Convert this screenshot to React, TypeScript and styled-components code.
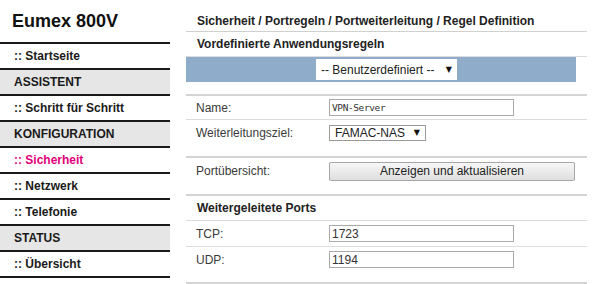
import React from "react";
import styled, { createGlobalStyle } from "styled-components";

const GlobalStyle = createGlobalStyle`
  html, body {
    margin: 0;
    padding: 0;
    background: #fff;
  }
  body {
    font-family: "Liberation Sans", Arial, sans-serif;
    font-size: 12px;
    color: #333;
  }
`;

const Page = styled.div`
  display: flex;
  width: 595px;
  height: 284px;
  overflow: hidden;
`;

const Sidebar = styled.nav`
  width: 170px;
  flex-shrink: 0;
`;

const Brand = styled.div`
  height: 42px;
  display: flex;
  align-items: center;
  padding-left: 12px;
  font-size: 18px;
  font-weight: bold;
  color: #111;
`;

const NavList = styled.ul`
  list-style: none;
  margin: 0;
  padding: 0;
  border-bottom: 2px solid #1a1a1a;
`;

const NavItem = styled.li<{ $group?: boolean; $active?: boolean }>`
  height: 24px;
  display: flex;
  align-items: center;
  padding-left: 14px;
  border-top: 2px solid #1a1a1a;
  background: ${({ $group }) => ($group ? "#e6e6e6" : "#fff")};
  color: ${({ $active }) => ($active ? "#e2007a" : "#1a1a1a")};
  font-size: 12px;
  font-weight: bold;
`;

const Main = styled.main`
  margin-left: 16px;
  width: 401px;
`;

const Group = styled.section<{ $pad: number }>`
  padding-bottom: ${({ $pad }) => $pad}px;
  border-bottom: 2px solid #d4d4d4;
`;

const Breadcrumb = styled.div`
  height: 32px;
  box-sizing: border-box;
  display: flex;
  align-items: flex-end;
  padding: 0 0 3px 11px;
  border-bottom: 1px solid #d0d0d0;
  font-weight: bold;
  color: #222;
`;

const Heading = styled.div<{ $divider?: boolean }>`
  height: 24px;
  display: flex;
  align-items: center;
  padding-left: 11px;
  border-bottom: ${({ $divider }) => ($divider ? "1px solid #dcdcdc" : "none")};
  font-weight: bold;
  color: #222;
`;

const BlueBar = styled.div`
  height: 25px;
  margin-right: 11px;
  padding-left: 11px;
  display: flex;
  align-items: center;
  justify-content: center;
  background: #8fadca;
`;

const Row = styled.div<{ $h: number; $divider?: boolean }>`
  height: ${({ $h }) => $h}px;
  display: grid;
  grid-template-columns: 133px 1fr;
  align-items: center;
  padding-left: 10px;
  border-bottom: ${({ $divider }) => ($divider ? "1px solid #dcdcdc" : "none")};
`;

const Label = styled.span`
  color: #3a3a3a;
`;

const Dropdown = styled.div<{ $w: number; $h: number; $bordered?: boolean }>`
  width: ${({ $w }) => $w}px;
  height: ${({ $h }) => $h}px;
  box-sizing: border-box;
  display: flex;
  align-items: center;
  justify-content: space-between;
  padding: 0 5px;
  background: #fff;
  border: ${({ $bordered }) => ($bordered ? "1px solid #9a9a9a" : "none")};
  color: #222;
`;

const Caret = styled.span`
  font-family: "DejaVu Sans", sans-serif;
  font-size: 8px;
  color: #111;
`;

const TextInput = styled.input<{ $mono?: boolean }>`
  width: 185px;
  height: 17px;
  box-sizing: border-box;
  margin: 0;
  padding: 0 2px;
  border: 1px solid #a9a9a9;
  border-radius: 0;
  outline: none;
  font-family: ${({ $mono }) =>
    $mono ? `"DejaVu Sans Mono", monospace` : `"Liberation Sans", Arial, sans-serif`};
  font-size: ${({ $mono }) => ($mono ? "9.5px" : "12px")};
  letter-spacing: ${({ $mono }) => ($mono ? "-0.4px" : "0")};
  color: #333;
`;

const ActionButton = styled.button`
  width: 246px;
  height: 19px;
  margin: 0;
  padding: 0;
  border: 1px solid #a6a6a6;
  border-radius: 2px;
  background: linear-gradient(#f7f7f7, #dfdfdf);
  font-family: "Liberation Sans", Arial, sans-serif;
  font-size: 12px;
  color: #222;
`;

const navItems = [
  { label: ":: Startseite" },
  { label: "ASSISTENT", group: true },
  { label: ":: Schritt für Schritt" },
  { label: "KONFIGURATION", group: true },
  { label: ":: Sicherheit", active: true },
  { label: ":: Netzwerk" },
  { label: ":: Telefonie" },
  { label: "STATUS", group: true },
  { label: ":: Übersicht" },
];

const App = () => {
  return (
    <Page>
      <GlobalStyle />
      <Sidebar>
        <Brand>Eumex 800V</Brand>
        <NavList>
          {navItems.map((item) => (
            <NavItem key={item.label} $group={item.group} $active={item.active}>
              {item.label}
            </NavItem>
          ))}
        </NavList>
      </Sidebar>

      <Main>
        <Group $pad={12}>
          <Breadcrumb>Sicherheit / Portregeln / Portweiterleitung / Regel Definition</Breadcrumb>
          <Heading $divider>Vordefinierte Anwendungsregeln</Heading>
          <BlueBar>
            <Dropdown $w={141} $h={21}>
              <span>-- Benutzerdefiniert --</span>
              <Caret>▼</Caret>
            </Dropdown>
          </BlueBar>
        </Group>

        <Group $pad={11}>
          <Row $h={23} $divider>
            <Label>Name:</Label>
            <TextInput $mono defaultValue="VPN-Server" />
          </Row>
          <Row $h={25}>
            <Label>Weiterleitungsziel:</Label>
            <Dropdown $w={97} $h={16} $bordered>
              <span>FAMAC-NAS</span>
              <Caret>▼</Caret>
            </Dropdown>
          </Row>
        </Group>

        <Group $pad={10}>
          <Row $h={26}>
            <Label>Portübersicht:</Label>
            <ActionButton>Anzeigen und aktualisieren</ActionButton>
          </Row>
        </Group>

        <Group $pad={10}>
          <Heading $divider>Weitergeleitete Ports</Heading>
          <Row $h={25} $divider>
            <Label>TCP:</Label>
            <TextInput defaultValue="1723" />
          </Row>
          <Row $h={25}>
            <Label>UDP:</Label>
            <TextInput defaultValue="1194" />
          </Row>
        </Group>
      </Main>
    </Page>
  );
};

export default App;
